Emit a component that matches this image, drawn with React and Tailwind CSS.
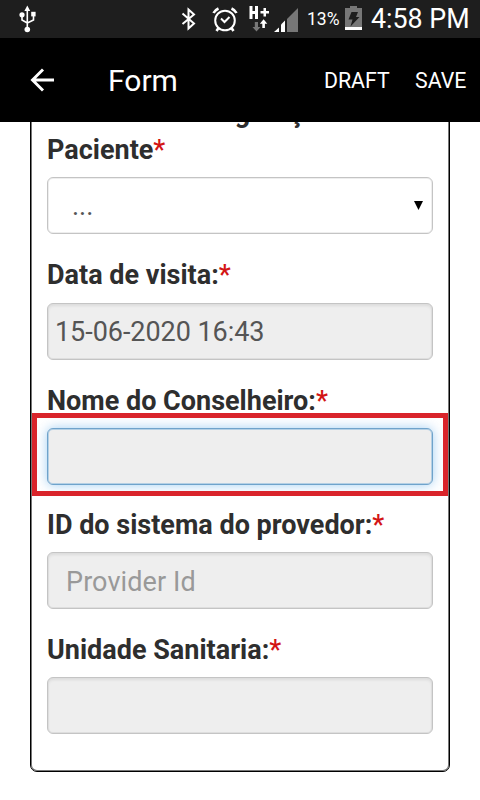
import React, { useState } from 'react';

const fields = [
    { id: 'visita', label: 'Data de visita:', rowClass: 'h-[125px]', labelClass: 'pt-[10px]' },
    { id: 'conselheiro', label: 'Nome do Conselheiro:', active: true, rowClass: 'h-[124.6px]', labelClass: 'pt-[11px]' },
    { id: 'provedor', label: 'ID do sistema do provedor:', placeholder: 'Provider Id', rowClass: 'h-[124.6px]', labelClass: 'pt-[11px]' },
    { id: 'unidade', label: 'Unidade Sanitaria:', rowClass: 'h-[124.6px]', labelClass: 'pt-[11px]' },
];

function UsbIcon() {
    return (
        <svg width="18" height="28" viewBox="0 0 18 28" fill="none" stroke="#fff" strokeWidth="1.6">
            <path d="M9.300 4v20M4 10v5L9.300 18M15.500 10v5L9.300 18" />
            <path d="M9.300 0.500l2.900 5.500H6.400z" fill="#fff" stroke="none" />
            <circle cx="4" cy="9.800" r="2.600" fill="#fff" stroke="none" />
            <path d="M13.200 6.800h4.400v4.600h-4.400z" fill="#fff" stroke="none" />
            <circle cx="9.300" cy="24.500" r="2.800" fill="#fff" stroke="none" />
        </svg>
    );
}

function BluetoothIcon() {
    return (
        <svg width="16" height="24" viewBox="0 0 16 24" fill="none" stroke="#fff" strokeWidth="2">
            <path d="M1.500 6.500L13 16.500L7.500 21.500V2.500L13 7.500L1.500 17" />
        </svg>
    );
}

function AlarmIcon() {
    return (
        <svg width="26" height="26" viewBox="0 0 26 26" fill="none" stroke="#fff">
            <circle cx="13" cy="14.500" r="9.800" strokeWidth="2" />
            <path d="M9 12.500l3.500 3.500L17.500 11" strokeWidth="2" />
            <path d="M1.500 7Q3 4 6.500 2.500M24.500 7Q23 4 19.500 2.500" strokeWidth="2.600" />
            <path d="M6.500 22l-2 3M19.500 22l2 3" strokeWidth="2.600" />
        </svg>
    );
}

function NetworkIcon() {
    return (
        <svg width="20" height="26" viewBox="0 0 20 26">
            <path d="M0.500 0h3v5h2.500V0h3v13H6V8H3.500v5h-3z" fill="#fff" />
            <path d="M11.500 5h3V2h2.500v3h3v2.500h-3v3h-2.500v-3h-3z" fill="#fff" />
            <path d="M5.800 16h3.200v5h2.500l-4 4.500l-4-4.500h2.300z" fill="#777" />
            <path d="M13.300 22h2.600v-4.200h2.400l-3.700-4.500l-3.700 4.500h2.400z" fill="#fff" />
        </svg>
    );
}

function SignalIcon() {
    return (
        <svg width="24" height="24" viewBox="0 0 24 24">
            <path d="M0 24l5-4.500V24z" fill="#fff" />
            <path d="M7 24v-7.500l4-4V24z" fill="#fff" />
            <path d="M13 24V11L24 0v24z" fill="#777" />
        </svg>
    );
}

function BatteryIcon() {
    return (
        <svg width="17" height="25" viewBox="0 0 17 25">
            <path d="M5 0h7v2h5v19H0V2h5z" fill="#777" />
            <path d="M0 21h17v3H0z" fill="#fff" />
            <path d="M6.500 6H13l-2 5h3.500L5.500 20.500l2-7H3.500z" fill="#1e1e1e" />
        </svg>
    );
}

function StatusBar() {
    return (
        <div className="flex h-[38px] items-center bg-[#1e1e1e] pr-[11px] pl-[18px] text-white">
            <UsbIcon />
            <div className="ml-auto flex items-center">
                <BluetoothIcon />
                <div className="ml-[15px]"><AlarmIcon /></div>
                <div className="ml-[11px]"><NetworkIcon /></div>
                <div className="ml-[5px] pt-px"><SignalIcon /></div>
                <span className="ml-[9px] w-[33px] pt-px text-[17.5px] whitespace-nowrap">13%</span>
                <div className="ml-[5px] -mt-px"><BatteryIcon /></div>
                <span className="ml-[9px] w-[98px] text-[26.8px] whitespace-nowrap">4:58 PM</span>
            </div>
        </div>
    );
}

function AppBar() {
    return (
        <header className="flex h-[84px] items-center bg-black pl-[30px] text-white">
            <button aria-label="Back">
                <svg width="25" height="24" viewBox="0 0 25 24" fill="none" stroke="#fff" strokeWidth="2.900">
                    <path d="M24 12H2.500M13 1.500L2.500 12L13 22.500" />
                </svg>
            </button>
            <h1 className="ml-[53px] w-[216px] pt-px text-[30px] whitespace-nowrap">Form</h1>
            <button className="w-[91px] pt-[2px] text-left text-[21.3px] whitespace-nowrap">DRAFT</button>
            <button className="pt-[2px] text-left text-[21.3px] whitespace-nowrap">SAVE</button>
        </header>
    );
}

function Label({ htmlFor, className, children }) {
    return (
        <label htmlFor={htmlFor} className={`block h-[56px] text-[27px] leading-[36px] font-bold whitespace-nowrap text-[#2e2e2e] ${className}`}>
            {children}<span className="font-medium text-[#d31515]">*</span>
        </label>
    );
}

export default function App() {
    const [values, setValues] = useState({ visita: '15-06-2020 16:43' });

    return (
        <div className="flex h-[800px] w-[480px] flex-col overflow-hidden bg-white font-['Roboto',sans-serif]">
            <StatusBar />
            <AppBar />
            <main className="min-h-0 flex-1 overflow-hidden px-[30px]">
                <form className="-mt-[40px] h-[690px] rounded-[7px] border border-black px-[16px] shadow-[inset_0_0_0_1px_#777]">
                    {/* Section title, scrolled under the app bar */}
                    <h2 className="h-[38px] pt-[12px] pl-[23px] text-center text-[27px] leading-[36px] font-bold text-[#2e2e2e]">Configuração</h2>

                    {/* Patient picker */}
                    <div className="h-[125.5px]">
                        <Label htmlFor="paciente" className="pt-[11px]">Paciente</Label>
                        <button
                            id="paciente"
                            type="button"
                            className="flex h-[57px] w-[386px] items-center justify-between rounded-[6px] border border-[#c4c4c4] pr-[9px] pl-[24px] text-[27px] text-[#555] shadow-[inset_0_0_0_1px_#eee]"
                        >
                            <span className="pt-[2px]">...</span>
                            <svg width="9" height="9" viewBox="0 0 9 9"><path d="M0 0h9L4.500 9z" fill="#000" /></svg>
                        </button>
                    </div>

                    {fields.map(({ id, label, placeholder, active, rowClass, labelClass }) => (
                        <div key={id} className={`relative ${rowClass}`}>
                            <Label htmlFor={id} className={labelClass}>{label}</Label>
                            <input
                                id={id}
                                value={values[id] || ''}
                                placeholder={placeholder}
                                onChange={(e) => setValues({ ...values, [id]: e.target.value })}
                                className={`block h-[57px] w-[386px] rounded-[6px] border bg-[#eee] pt-[2px] text-[27px] text-[#555] outline-none placeholder:text-[#999] ${placeholder ? 'pl-[18px] tracking-[0.1px]' : 'pl-[7px] tracking-[-0.05px]'} ${active
                                    ? 'border-[#6fa3cb] shadow-[inset_0_0_0_1px_#b5d0e4,0_0_12px_rgba(102,175,233,0.6)]'
                                    : 'border-[#c4c4c4] shadow-[inset_0_0_0_1px_#dedede,inset_0_2px_3px_rgba(0,0,0,0.08)]'}`}
                            />
                            {active && <div className="absolute top-[41.5px] -left-[15px] h-[83px] w-[416px] border-[5px] border-[#d9242b]" />}
                        </div>
                    ))}
                </form>
            </main>
        </div>
    );
}
